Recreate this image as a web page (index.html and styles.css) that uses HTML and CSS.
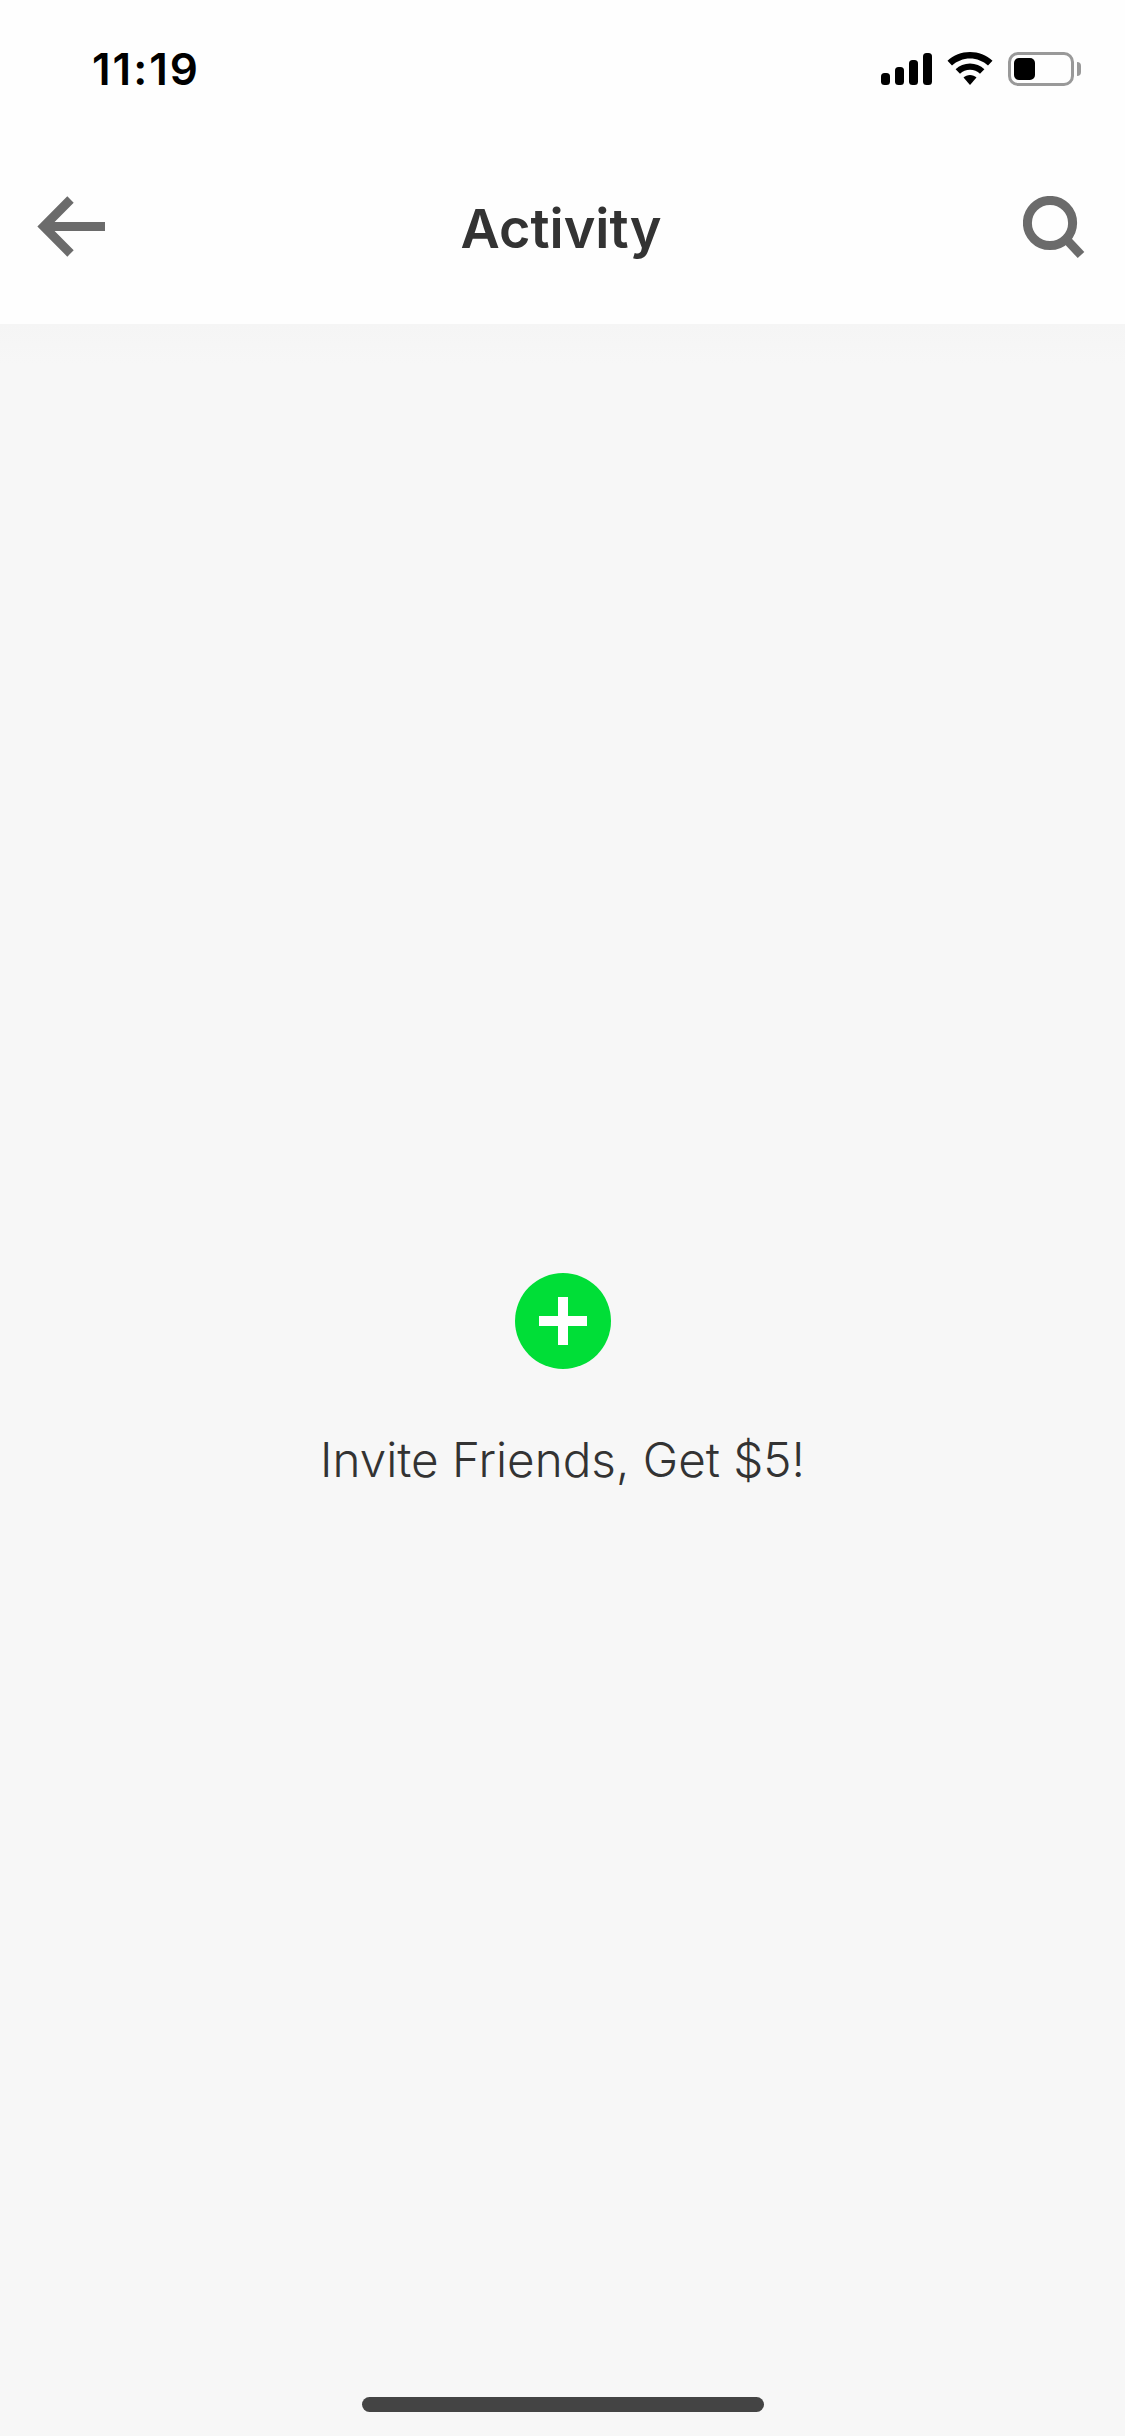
FILE: index.html
```html
<!DOCTYPE html>
<html lang="en">
<head>
    <meta charset="UTF-8" />
    <title>Activity</title>
    <link rel="stylesheet" href="styles.css">
</head>
<body>
    <header class="top">
        <div class="status-bar">
            <span class="time">11:19</span>
            <div class="status-icons">
                <svg class="signal" width="51" height="34" viewBox="0 0 51 34">
                    <rect x="0" y="21" width="9" height="12" rx="3.5" />
                    <rect x="14" y="15" width="9" height="18" rx="3.5" />
                    <rect x="28" y="8" width="9" height="25" rx="3.5" />
                    <rect x="42" y="1" width="9" height="32" rx="3.5" />
                </svg>
                <svg class="wifi" width="46" height="34" viewBox="0 0 46 34">
                    <path d="M23 0C14.500 0 6.500 3.300 0.500 8.800L5 13.500C9.800 9.200 16.200 6.500 23 6.500C29.800 6.500 36.200 9.200 41 13.500L45.500 8.800C39.500 3.300 31.500 0 23 0Z" />
                    <path d="M23 11.500C17.500 11.500 12.400 13.600 8.600 17.200L13 21.800C15.700 19.300 19.200 17.800 23 17.800C26.800 17.800 30.300 19.300 33 21.800L37.400 17.200C33.600 13.600 28.500 11.500 23 11.500Z" />
                    <path d="M23 23C20.500 23 18.200 24 16.500 25.500L23 33L29.500 25.500C27.800 24 25.500 23 23 23Z" />
                </svg>
                <div class="battery">
                    <div class="battery-body">
                        <div class="battery-level"></div>
                    </div>
                    <div class="battery-nub"></div>
                </div>
            </div>
        </div>
        <nav class="nav-bar">
            <svg class="nav-icon" width="68" height="62" viewBox="0 0 68 62">
                <path d="M68 30.500H7M33.500 3.500L6.700 30.500L33.500 57.500" />
            </svg>
            <h1 class="title">Activity</h1>
            <svg class="nav-icon" width="62" height="64" viewBox="0 0 62 64">
                <circle cx="27" cy="27" r="22.600" />
                <path d="M43 43L58 59" />
            </svg>
        </nav>
    </header>
    <main class="content">
        <div class="invite-button">
            <div class="plus"></div>
        </div>
        <p class="invite-text">Invite Friends, Get $5!</p>
    </main>
    <footer class="home-area">
        <div class="home-bar"></div>
    </footer>
</body>
</html>
```

FILE: styles.css
```css
* {
    padding: 0;
    margin: 0;
    box-sizing: border-box;
}
body {
    width: 1125px;
    height: 100vh;
    display: flex;
    flex-direction: column;
    background: #f7f7f7;
    font-family: Inter, "Liberation Sans", sans-serif;
    overflow: hidden;
}
.top {
    height: 324px;
    background: #fefefe;
}
/* barre d'etat */
.status-bar {
    height: 172px;
    padding: 52px 44px 0 92px;
    display: flex;
    justify-content: space-between;
    align-items: flex-start;
}
.time {
    font-size: 44px;
    line-height: 34px;
    font-weight: 600;
    letter-spacing: 2px;
    color: #000;
}
.status-icons {
    display: flex;
    align-items: flex-start;
}
.signal, .wifi {
    fill: #000;
    margin-right: 15px;
}
.battery {
    display: flex;
    align-items: center;
    height: 34px;
}
.battery-body {
    width: 66px;
    height: 34px;
    padding: 3px;
    border: 3px solid #999;
    border-radius: 10px;
}
.battery-level {
    width: 21px;
    height: 22px;
    background: #000;
    border-radius: 5px;
}
.battery-nub {
    width: 4px;
    height: 14px;
    margin-left: 3px;
    background: #999;
    border-radius: 0 7px 7px 0;
}
/* barre de navigation */
.nav-bar {
    height: 100px;
    padding: 24px 40px 0 37px;
    display: flex;
    justify-content: space-between;
    align-items: flex-start;
}
.nav-icon {
    fill: none;
    stroke: #6b6b6b;
    stroke-width: 9;
}
.title {
    margin: 3px 6px 0 0;
    font-size: 54px;
    line-height: 60px;
    font-weight: 600;
    color: #333;
}
.content {
    flex: 1;
    padding-top: 949px;
    display: flex;
    flex-direction: column;
    align-items: center;
    background: linear-gradient(#f5f5f5, #f7f7f7 40px);
}
.invite-button {
    width: 96px;
    height: 96px;
    border-radius: 50%;
    background: #00de37;
    display: flex;
    justify-content: center;
    align-items: center;
}
.plus {
    width: 48px;
    height: 48px;
    background:
        linear-gradient(#fff, #fff) center / 48px 10px no-repeat,
        linear-gradient(#fff, #fff) center / 10px 48px no-repeat;
}
.invite-text {
    margin-top: 61px;
    font-size: 47.600px;
    line-height: 60px;
    font-weight: 300;
    color: #333;
}
.home-area {
    height: 39px;
}
.home-bar {
    width: 402px;
    height: 15px;
    margin: 0 auto;
    background: #444;
    border-radius: 8px;
}
```
